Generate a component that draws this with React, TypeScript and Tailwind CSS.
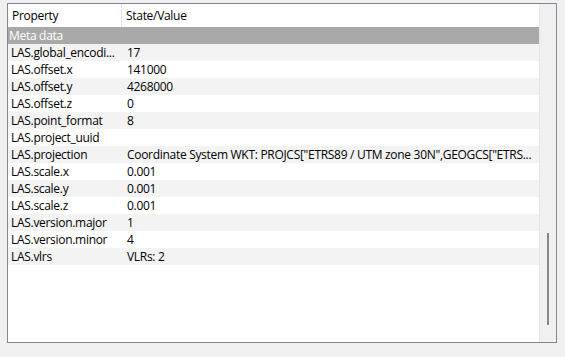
import React from "react";

const rows: [string, string][] = [
  ["LAS.global_encodi...", "17"],
  ["LAS.offset.x", "141000"],
  ["LAS.offset.y", "4268000"],
  ["LAS.offset.z", "0"],
  ["LAS.point_format", "8"],
  ["LAS.project_uuid", ""],
  [
    "LAS.projection",
    'Coordinate System WKT: PROJCS["ETRS89 / UTM zone 30N",GEOGCS["ETRS...',
  ],
  ["LAS.scale.x", "0.001"],
  ["LAS.scale.y", "0.001"],
  ["LAS.scale.z", "0.001"],
  ["LAS.version.major", "1"],
  ["LAS.version.minor", "4"],
  ["LAS.vlrs", "VLRs: 2"],
];

export default function App() {
  return (
    <div
      className="w-[565px] h-[357px] bg-[#f0f0f0] pt-[3px] pl-[7px]"
      style={{ fontFamily: '"Open Sans", "Noto Sans", sans-serif' }}
    >
      <div className="w-[550px] h-[340px] border border-[#828790] bg-white flex">
        <div className="w-[531px] flex flex-col text-[12px] tracking-[-0.3px] text-black leading-[17px]">
          <div className="h-[23px] flex items-center bg-white">
            <div className="w-[114px] pl-[4px] border-r border-[#e5e5e5] h-full flex items-center pb-[1px]">
              Property
            </div>
            <div className="pl-[4px] pb-[1px]">State/Value</div>
          </div>
          <div className="h-[17px] bg-[#a9a9a9] text-white pl-[1px]">Meta data</div>
          {rows.map(([k, v], i) => (
            <div
              key={k}
              className={
                "h-[17px] flex " + (i % 2 === 0 ? "bg-[#f3f3f3]" : "bg-white")
              }
            >
              <div className="w-[115px] h-[17px] pl-[3px] whitespace-nowrap overflow-hidden">
                {k}
              </div>
              <div className="w-[416px] h-[17px] pl-[4px] whitespace-nowrap overflow-hidden">
                {v}
              </div>
            </div>
          ))}
        </div>
        <div className="w-[17px] h-full bg-[#f0f0f0] border-l border-[#e6e6e6] relative">
          <div className="absolute left-[7px] top-[229px] w-[2px] h-[92px] bg-[#888888]" />
        </div>
      </div>
    </div>
  );
}
